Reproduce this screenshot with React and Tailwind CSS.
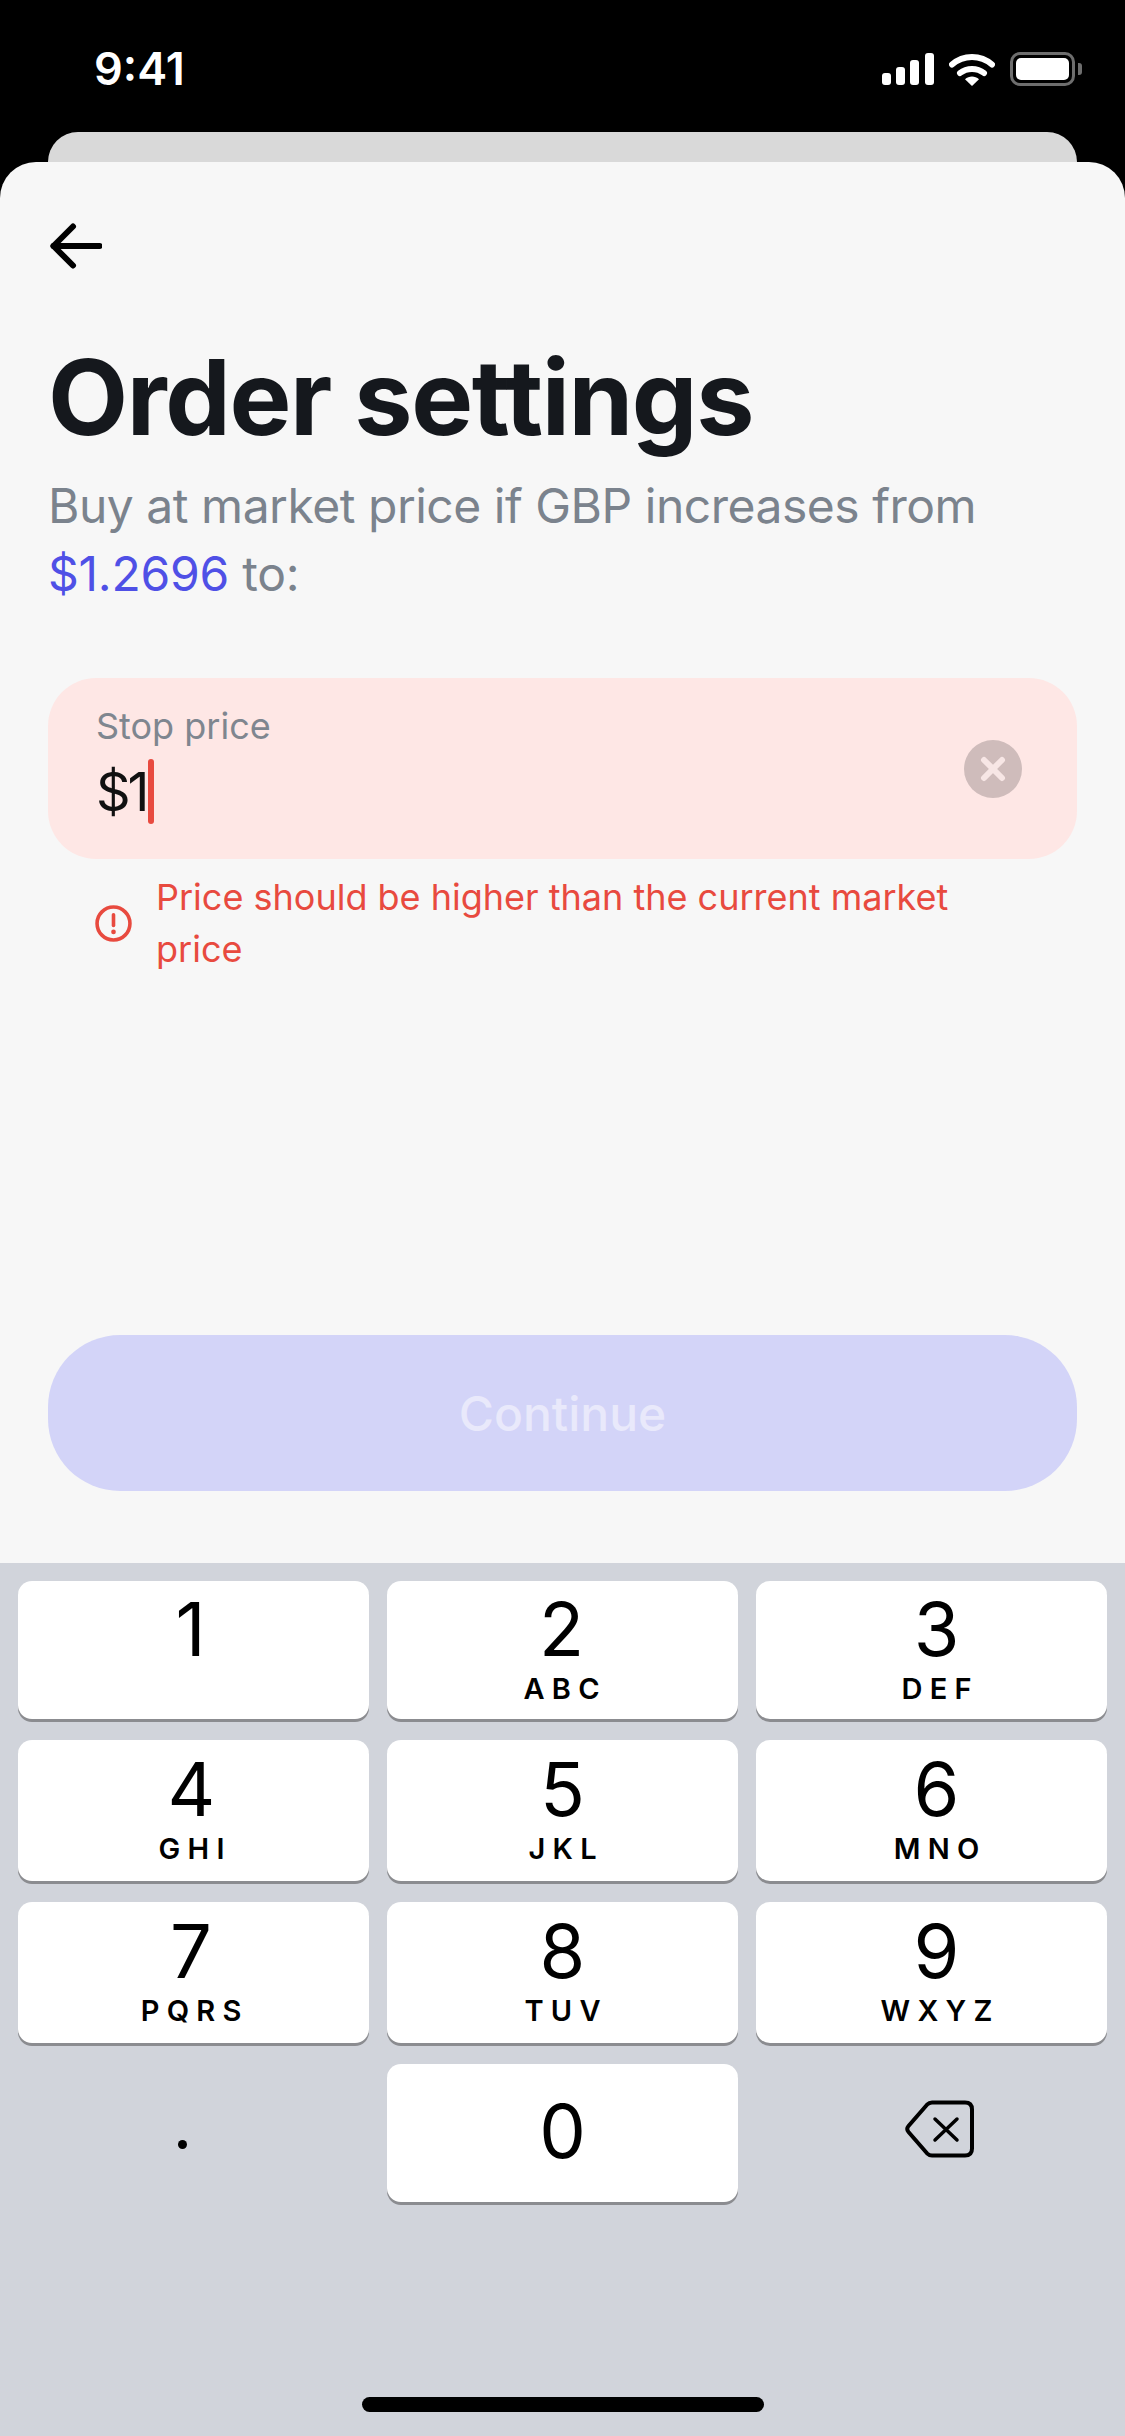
import React from "react";

const FONT = "font-['Inter','Liberation_Sans',sans-serif]";

const KEYS = [
  ["1", "", "pr-[6px]"],
  ["2", "ABC", "pr-[2px]"],
  ["3", "DEF", "pl-[10px]"],
  ["4", "GHI", "pr-[4px]"],
  ["5", "JKL", "pr-[0px]"],
  ["6", "MNO", "pl-[10px]"],
  ["7", "PQRS", "pr-[5px]"],
  ["8", "TUV", "pr-[0px]"],
  ["9", "WXYZ", "pl-[10px]"],
];

function Signal() {
  return (
    <svg width="52" height="32" viewBox="0 0 52 32" fill="#fff">
      <rect x="0" y="20" width="9" height="12" rx="3" />
      <rect x="14" y="14" width="9" height="18" rx="3" />
      <rect x="28" y="7" width="9" height="25" rx="3" />
      <rect x="43" y="0" width="9" height="32" rx="3" />
    </svg>
  );
}

function Wifi() {
  return (
    <svg width="46" height="33" viewBox="0 0 46 33" fill="none">
      <path d="M3 11.5C14.5 1.5 31.5 1.5 43 11.5" stroke="#fff" strokeWidth="6" strokeLinecap="round" />
      <path d="M11 20C17.8 14.5 28.2 14.5 35 20" stroke="#fff" strokeWidth="6" strokeLinecap="round" />
      <path d="M16 26.2C20 22.6 26 22.6 30 26.2L23 33Z" fill="#fff" />
    </svg>
  );
}

function Battery() {
  return (
    <div className="flex items-center gap-[3px]">
      <div className="w-[65px] h-[34px] rounded-[10px] border-[3px] border-[#6e6e6e] p-[3px]">
        <div className="w-full h-full rounded-[5px] bg-white" />
      </div>
      <div className="w-[4px] h-[12px] rounded-r-[3px] bg-[#6e6e6e]" />
    </div>
  );
}

function BackArrow() {
  return (
    <svg width="54" height="48" viewBox="0 0 54 48" fill="none" stroke="#000" strokeWidth="6" strokeLinecap="round" strokeLinejoin="round">
      <path d="M5.5 24H51.5" />
      <path d="M25 4.5L5.5 24L25 43.5" />
    </svg>
  );
}

function ClearButton() {
  return (
    <div className="w-[58px] h-[58px] rounded-full bg-[#cfbcbb] flex items-center justify-center">
      <svg width="26" height="26" viewBox="0 0 26 26" fill="none" stroke="#f7e6e5" strokeWidth="6" strokeLinecap="round">
        <path d="M4 4L22 22M22 4L4 22" />
      </svg>
    </div>
  );
}

function ErrorIcon() {
  return (
    <svg width="37" height="37" viewBox="0 0 36 36" fill="none" stroke="#e84a3f" strokeWidth="3.5" strokeLinecap="round">
      <circle cx="18" cy="18" r="16" />
      <path d="M18 9.5V20" />
      <path d="M18 26V26.2" strokeWidth="4.5" />
    </svg>
  );
}

function BackspaceIcon() {
  return (
    <svg width="70" height="58" viewBox="0 0 70 58" fill="none" stroke="#000" strokeWidth="4" strokeLinecap="round" strokeLinejoin="round">
      <path d="M27 2.5H60C64.5 2.5 67 5 67 9.5V48.5C67 53 64.5 55.5 60 55.5H27C25 55.5 23.5 54.8 22 53.3L3.5 32C2 30.2 2 27.8 3.5 26L22 4.7C23.5 3.2 25 2.5 27 2.5Z" />
      <path d="M30 19L52 40M52 19L30 40" strokeWidth="3.5" />
    </svg>
  );
}

function Key({ digit, letters, nudge }) {
  return (
    <div className={`rounded-[14px] bg-white shadow-[0_3px_0_#8b8c90] flex flex-col items-center justify-center pb-[15px] ${nudge}`}>
      <div className="h-[92px] text-[74px] leading-[94px] text-black">{digit}</div>
      <div className="h-[30px] text-[29px] leading-[30px] font-semibold tracking-[0.25em] pl-[0.25em] text-black">{letters}</div>
    </div>
  );
}

export default function App() {
  return (
    <div className={`w-[1125px] h-[2436px] bg-black flex flex-col overflow-hidden ${FONT}`}>
      <div className="h-[132px] pl-[94px] pr-[43px] pt-[43px] flex justify-between items-start">
        <span className="text-[45px] leading-[52px] font-semibold text-white">9:41</span>
        <div className="flex items-center gap-[15px] pt-[9px]">
          <Signal />
          <Wifi />
          <Battery />
        </div>
      </div>
      <div className="h-[30px] mx-[48px] rounded-t-[36px] bg-[#d9d9d9]" />

      <div className="h-[1401px] rounded-t-[36px] bg-[#f7f7f7] px-[48px] flex flex-col">
        <div className="pt-[60px]">
          <BackArrow />
        </div>
        <h1 className="mt-[64px] text-[104px] leading-[126px] font-bold text-[#15181d] tracking-[-0.013em]">Order settings</h1>
        <p className="mt-[12px] text-[48px] leading-[68px] tracking-[-0.01em] text-[#7b838d]">
          Buy at market price if GBP increases from
          <br />
          <span className="tracking-[-0.005em]">
            <span className="text-[#4f50e6]">$1.2696</span> to:
          </span>
        </p>

        <div className="mt-[70px] h-[181px] rounded-[48px] bg-[#fee7e5] pl-[48px] pr-[55px] flex items-center justify-between">
          <div>
            <div className="text-[36px] leading-[44px] text-[#7f868f] -mt-[9px]">Stop price</div>
            <div className="flex items-center h-[66px] mt-[11px]">
              <span className="text-[54px] leading-[66px] tracking-[-0.06em] text-[#111]">$1</span>
              <span className="w-[6px] h-[65px] rounded-full bg-[#e84a3f] ml-[2px]" />
            </div>
          </div>
          <ClearButton />
        </div>

        <div className="mt-[12px] pl-[47px] flex items-center gap-[24px]">
          <ErrorIcon />
          <p className="text-[36px] leading-[52px] text-[#e84a3f] w-[840px]">Price should be higher than the current market price</p>
        </div>

        <button className="mt-auto mb-[72px] h-[156px] rounded-[72px] bg-[#d3d4f8] pt-[2px] text-[48px] font-medium text-[#e9e9fb]">Continue</button>
      </div>

      <div className="flex-1 bg-[#d1d4db] px-[18px] pt-[18px] relative">
        <div className="grid grid-cols-3 grid-rows-[138px_141px_141px_138px] gap-x-[18px] gap-y-[21px]">
          {KEYS.map(([digit, letters, nudge]) => (
            <Key key={digit} digit={digit} letters={letters} nudge={nudge} />
          ))}
          <div className="flex justify-center items-center pr-[23px]">
            <span className="w-[9px] h-[9px] rounded-full bg-black mt-[22px]" />
          </div>
          <div className="rounded-[14px] bg-white shadow-[0_3px_0_#8b8c90] flex items-center justify-center pb-[4px] text-[74px] text-black">0</div>
          <div className="flex items-center justify-center pb-[8px] pl-[16px]">
            <BackspaceIcon />
          </div>
        </div>
        <div className="absolute left-[362px] bottom-[24px] w-[402px] h-[15px] rounded-full bg-black" />
      </div>
    </div>
  );
}
